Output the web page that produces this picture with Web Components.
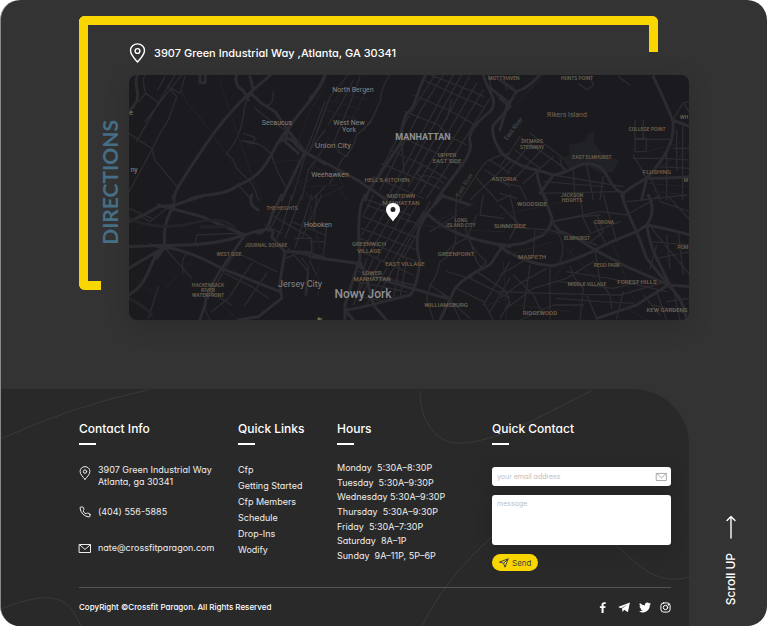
<!DOCTYPE html>
<html lang="en">
<head>
<meta charset="utf-8">
<meta name="viewport" content="width=device-width, initial-scale=1">
<title>Crossfit Paragon</title>
<style>
  body { margin: 0; background: #fff; color: #fff; font-family: Inter, "Open Sans", sans-serif; font-feature-settings: "cv11"; }
</style>
</head>
<body>
<page-shell id="top">
  <directions-panel>
    <span slot="address">3907 Green Industrial Way ,Atlanta, GA 30341</span>
    <city-map></city-map>
  </directions-panel>
  <site-footer slot="footer">
    <footer-column heading="Contact Info">
      <contact-list></contact-list>
    </footer-column>
    <footer-column heading="Quick Links">
      <quick-links></quick-links>
    </footer-column>
    <footer-column heading="Hours">
      <opening-hours></opening-hours>
    </footer-column>
    <footer-column heading="Quick Contact">
      <contact-form></contact-form>
    </footer-column>
    <span slot="legal">CopyRight ©Crossfit Paragon. All Rights Reserved</span>
    <social-links slot="social"></social-links>
  </site-footer>
  <scroll-up slot="rail"></scroll-up>
</page-shell>

<script>
const define = (name, html, setup) => {
  const template = document.createElement('template');
  template.innerHTML = html;
  customElements.define(name, class extends HTMLElement {
    constructor() {
      super();
      this.attachShadow({ mode: 'open' }).append(template.content.cloneNode(true));
    }
    connectedCallback() { if (setup) setup(this, this.shadowRoot); }
  });
};

/* ---------- icons ---------- */
const ICONS = {
  pin: ['0 0 16 20', '<path d="M8 19C5 15.5 1 12 1 7.600A7 6.700 0 0 1 15 7.600C15 12 11 15.500 8 19Z"/><circle cx="8" cy="8" r="2.400"/>'],
  phone: ['0 0 24 24', '<path d="M22 16.900v3a2 2 0 0 1-2.200 2A19.800 19.800 0 0 1 2.100 4.200 2 2 0 0 1 4.100 2h3a2 2 0 0 1 2 1.700c.1 1 .4 1.900.7 2.800a2 2 0 0 1-.5 2.100L8.100 9.900a16 16 0 0 0 6 6l1.300-1.300a2 2 0 0 1 2.100-.4c.9.3 1.800.6 2.800.7a2 2 0 0 1 1.700 2z"/>'],
  mail: ['0 0 24 18', '<path d="M1 1h22v16H1zM1.500 1.500 12 11 22.500 1.500"/>'],
  send: ['0 0 24 24', '<path d="M2 9.500 22 2 14.500 22 11 13zM22 2 11 13"/>'],
  arrow: ['0 0 10 24', '<path d="M5 23V1.500M1 5.500 5 1.500l4 4"/>'],
  facebook: ['0 0 8 13', '<path class="solid" d="M2.300 13V7.200H.3V4.900h2V3.200C2.300 1.200 3.500.2 5.300.2c.9 0 1.600.1 1.900.1v2.100H5.900c-1 0-1.200.5-1.200 1.200v1.300H7l-.3 2.300h-2V13z"/>'],
  telegram: ['0 0 14 13', '<path class="solid" d="M14 .5 11.600 12.200 7.300 9.100 5.200 11.700 4.700 7.800 11.300 2.800 3.700 7.300 0 6z"/>'],
  twitter: ['0 0 24 20', '<path class="solid" d="M24 2.400a9.800 9.800 0 0 1-2.800.8A4.900 4.900 0 0 0 23.300.5a9.900 9.900 0 0 1-3.100 1.200 4.900 4.900 0 0 0-8.400 4.500A14 14 0 0 1 1.700 1a4.900 4.900 0 0 0 1.500 6.600 4.900 4.900 0 0 1-2.200-.6 4.900 4.900 0 0 0 3.900 4.900 5 5 0 0 1-2.200.1 4.900 4.900 0 0 0 4.600 3.400A9.900 9.900 0 0 1 0 17.500 14 14 0 0 0 21.500 5c1-.7 1.800-1.600 2.500-2.600z"/>'],
  instagram: ['0 0 24 24', '<rect x="2" y="2" width="20" height="20" rx="6"/><circle cx="12" cy="12" r="4.800"/><circle cx="17.800" cy="6.200" r=".7"/>']
};
define('ui-icon', `
  <style>
    :host { display: block; flex: none; }
    svg { display: block; width: 100%; height: 100%; overflow: visible; fill: none; stroke: currentColor; stroke-linecap: round; stroke-linejoin: round; stroke-width: var(--line, 1px); }
    svg * { vector-effect: non-scaling-stroke; }
    .solid { fill: currentColor; stroke: none; }
  </style>
  <svg aria-hidden="true"></svg>`, (host, root) => {
  const [box, art] = ICONS[host.getAttribute('name')];
  const svg = root.querySelector('svg');
  svg.setAttribute('viewBox', box);
  if (host.hasAttribute('bold')) svg.setAttribute('style', '--line: 1.4px');
  svg.innerHTML = art;
});

/* ---------- page frame ---------- */
define('page-shell', `
  <style>
    :host { display: flex; flex-direction: column; box-sizing: border-box; margin-bottom: 2px; min-height: calc(100vh - 2px); background: #333; border-left: 1px solid #8a8a8a; border-radius: 20px; overflow: hidden; }
    .lower { display: grid; grid-template-columns: 1fr 78px; flex: 1; }
  </style>
  <slot></slot>
  <div class="lower"><slot name="footer"></slot><slot name="rail"></slot></div>`);

/* ---------- directions ---------- */
define('corner-bracket', `
  <style>
    :host { display: block; }
    .top, .side { position: absolute; box-sizing: border-box; border: 9px solid #f9d600; }
    .top { inset: 0 0 auto 0; height: 36px; border-bottom: 0; border-radius: 6px 6px 0 0; }
    .side { inset: 0 auto 0 0; width: 22px; border-right: 0; border-radius: 6px 0 0 6px; }
  </style>
  <div class="top"></div><div class="side"></div>`);

define('directions-panel', `
  <style>
    :host { display: block; position: relative; padding: 42px 78px 69px; }
    corner-bracket { position: absolute; inset: 16px 109px 99px 78px; }
    .grid { display: grid; grid-template-columns: 50px 1fr; position: relative; }
    .address { grid-column: 2; display: flex; align-items: center; gap: 8px; height: 21px; padding-bottom: 12px; font-size: 11px; font-weight: 500; }
    .address ui-icon { width: 17px; height: 20px; }
    h2 { align-self: start; margin: 0; padding: 45px 5px 0 0; writing-mode: vertical-rl; font: 700 21px/28px Lato, sans-serif; color: #456e87; }
    h2 span { display: block; transform: rotate(180deg); }
  </style>
  <corner-bracket></corner-bracket>
  <div class="grid">
    <div class="address"><ui-icon name="pin" bold></ui-icon><slot name="address"></slot></div>
    <h2><span>DIRECTIONS</span></h2>
    <slot></slot>
  </div>`);

/* ---------- map ---------- */
const LABELS = [
  ['town', 7, 353, 92, 'North Bergen'], ['town', 7, 277, 125, 'Secaucus'], ['town', 7, 349, 125, 'West New'], ['town', 7, 349, 132, 'York'],
  ['town', 8, 333, 148, 'Union City'], ['town', 7, 330, 177, 'Weehawken'], ['town', 7, 318, 227, 'Hoboken'],
  ['town', 9, 300, 287, 'Jersey City'], ['city', 12, 363, 298, 'Nowy Jork'], ['city strong', 9, 423, 140, 'MANHATTAN'],
  ['town', 7, 131, 115, 'e'], ['town', 7, 134, 172, 'ny'], ['isle', 7, 567, 117, 'Rikers Island'],
  ['area', 6, 447, 157, 'UPPER'], ['area', 6, 447, 163, 'EAST SIDE'], ['area', 6, 387, 182, "HELL'S KITCHEN"],
  ['area', 6, 401, 198, 'MIDTOWN'], ['area', 6, 401, 205, 'MANHATTAN'], ['area', 5, 504, 80, 'MOTT HAVEN'],
  ['area', 5, 577, 80, 'HUNTS POINT'], ['area', 5, 647, 131, 'COLLEGE POINT'], ['area', 5, 684, 119, 'WH'],
  ['area', 5, 532, 143, 'DITMARS'], ['area', 5, 532, 149, 'STEINWAY'], ['area', 5, 592, 159, 'EAST ELMHURST'],
  ['area', 6, 657, 174, 'FLUSHING'], ['area', 5, 686, 182, 'M'], ['area', 6, 504, 181, 'ASTORIA'],
  ['area', 5, 572, 197, 'JACKSON'], ['area', 5, 572, 202, 'HEIGHTS'], ['area', 6, 532, 206, 'WOODSIDE'],
  ['area', 5, 461, 222, 'LONG'], ['area', 5, 461, 227, 'ISLAND CITY'], ['area', 6, 510, 228, 'SUNNYSIDE'],
  ['area', 5, 604, 224, 'CORONA'], ['area', 5, 577, 240, 'ELMHURST'], ['area', 5, 683, 249, 'POM'],
  ['area', 6, 532, 259, 'MASPETH'], ['area', 5, 607, 267, 'REGO PARK'], ['area', 5, 587, 286, 'MIDDLE VILLAGE'],
  ['area', 6, 637, 284, 'FOREST HILLS'], ['area', 6, 667, 312, 'KEW GARDENS'], ['area', 6, 540, 315, 'RIDGEWOOD'],
  ['area', 6, 456, 256, 'GREENPOINT'], ['area', 6, 446, 307, 'WILLIAMSBURG'], ['area', 6, 369, 246, 'GREENWICH'],
  ['area', 6, 369, 253, 'VILLAGE'], ['area', 6, 405, 266, 'EAST VILLAGE'], ['area', 6, 372, 275, 'LOWER'],
  ['area', 6, 372, 281, 'MANHATTAN'], ['area', 5, 282, 210, 'THE HEIGHTS'], ['area', 5, 266, 247, 'JOURNAL SQUARE'],
  ['area', 5, 229, 256, 'WEST SIDE'], ['area', 5, 208, 287, 'HACKENSACK'], ['area', 5, 208, 292, 'RIVER'], ['area', 5, 208, 297, 'WATERFRONT']
];
define('city-map', `
  <style>
    :host { display: block; aspect-ratio: 560 / 245; border-radius: 8px; overflow: hidden; background: #1b1b1f; box-shadow: 0 6px 24px rgba(0, 0, 0, .16); }
    svg { display: block; width: 100%; height: 100%; }
    .roads { fill: none; stroke: #2b2b30; stroke-linejoin: round; stroke-linecap: round; }
    .roads path { stroke-width: 4px; }
    .roads .main { stroke-width: 9px; }
    .roads .faint { stroke: #242428; stroke-width: 3px; }
    .roads .land { fill: #202226; stroke: none; }
    text { font-family: Roboto, sans-serif; text-anchor: middle; }
    .town { fill: #858588; }
    .city { fill: #909093; font-weight: 500; }
    .strong { font-weight: 700; }
    .isle { fill: #6f6a60; }
    .area { fill: #736550; font-weight: 500; }
    .river { fill: #4a555c; }
    .river.east { fill: #4d483f; }
  </style>
  <svg viewBox="129 75 560 245" preserveAspectRatio="xMidYMid slice" role="img" aria-label="Map of New York">
    <g class="roads">
      <g transform="translate(125 70) scale(.3333)">
        <path class="main" d="M38 14C22 40 48 70 34 95Q24 112 12 125M438 14 375 68C300 140 260 190 160 350Q148 370 146 390M375 68 410 100 450 125 488 180C440 220 440 310 340 345C290 385 220 368 190 390M600 20C570 90 530 110 488 180L540 245 600 282M540 245 470 390M335 14Q325 45 355 62L370 90M375 20 385 60 370 80M465 215Q490 195 510 220T540 245M488 180 480 215 520 250M225 14v24h16V14"/>
        <path d="M150 14 100 100 35 215M60 14Q50 30 62 70L100 98M170 14 60 155M62 70Q45 90 40 95M130 50 155 80 130 150 105 190 82 237 12 365M12 190 82 237Q85 270 98 280L158 352M98 60 120 20M180 20 165 70 140 55M365 90C350 120 365 180 305 250Q330 270 335 295L365 325M355 190 390 202 385 222 350 212M350 212Q410 215 440 255C450 290 470 330 485 355M410 100Q445 120 445 65M390 115 440 155 480 180M600 180 540 260 500 390M600 230 550 300 530 390M600 95 560 200 540 250M600 120 575 190M340 345 380 390M370 330Q385 340 400 390M600 350 560 390"/>
        <path class="faint" d="M170 55Q180 105 220 135L330 290M280 20 340 200 390 345M395 345 410 390M600 50 550 130 520 220M440 280Q480 270 530 270M500 310 560 390M520 330 550 350M600 300 540 340"/>
      </g>
      <g transform="translate(310 70) scale(.3333)">
        <path class="main" d="M45 14Q30 55 0 85M348 14C320 60 320 110 290 130Q270 175 275 215C230 280 200 330 180 355L165 390M0 255Q90 300 150 335L230 390M520 14C530 60 570 90 540 125Q470 180 480 215C490 250 455 285 400 360L380 390M535 50 600 100M600 110 550 165Q540 200 580 255"/>
        <path d="M240 14Q210 60 212 90L180 160 140 195Q130 240 95 270L60 340M212 90 190 140 160 180M115 14 60 80 20 190 0 240M130 30 100 90 55 165M150 20 120 100 70 220M75 220 85 245 110 260 130 225M375 14 290 150 190 345M400 14 330 125 210 360M430 14 240 370M455 14 390 130 250 390M478 20 295 350M500 40 360 280 300 380M520 60 330 370M540 85 400 310 350 385M285 125 385 165 420 200 470 225M310 75 415 120 480 155 500 170M340 30 440 75 520 110M360 14 490 65 520 80M260 195 370 245 430 275 460 290M240 240 340 285 410 325M215 280 320 325 390 355M190 320 260 350 340 385M425 90 410 150M275 215 282 305M330 320Q370 310 400 340M340 285 320 310 350 340M600 250Q540 260 520 285L450 390M600 275 480 390M540 270 600 310M525 300 600 350M500 325 560 390M580 14 590 60M535 14 545 60"/>
        <path class="faint" d="M70 60 170 90M60 90 155 120M50 120 140 150M85 245 140 200M70 290 100 350 20 390M60 200 0 310M0 350 80 345 110 390M170 60 120 160M100 40 75 95M0 280 60 320M25 110 60 150"/>
      </g>
      <g transform="translate(500 70) scale(.3333)">
        <path class="land" d="M205 225 255 215Q265 180 285 185L280 215 310 255 358 270 340 305 300 310 260 285 210 300 185 265 210 255Z"/>
        <path class="main" d="M120 14Q90 50 50 65L0 30M50 65 20 110 0 180M0 85 30 110M0 245Q50 290 110 300L160 315C220 305 240 270 285 285S320 350 370 370Q400 345 440 325C470 290 530 230 518 150Q500 105 460 20M518 150 570 170M440 325Q500 325 570 320M110 300Q115 350 140 390M160 315 120 370M370 370V390M440 325 425 390"/>
        <path d="M235 40 262 60 280 45 270 20M355 20 390 45M405 150V245L438 245 440 205H405M430 150V205M405 208H515M400 255 440 325M400 265 480 265M518 150 550 98 570 95M550 98 570 130M520 235H570M490 265 570 270M470 290 570 295M500 245V390M530 180V300M548 170V390M455 330 480 390M0 290 60 200M20 310 95 215M45 325 130 235M70 340 160 260M45 240 120 295M65 205 160 270 200 300M90 190 190 265M0 335 60 350M160 315 370 350M130 335 310 350M180 265 190 305M220 300 225 390M260 285 280 390M310 320 300 390M60 350 80 390M0 370 50 385M120 370 350 365"/>
        <path class="faint" d="M0 110 65 60M40 110 105 40M80 70 130 20M440 245 540 220M460 300 570 240M440 340 570 350M460 365 570 375"/>
      </g>
      <g transform="translate(125 195) scale(.3333)">
        <path class="main" d="M240 0 150 30 100 35Q60 60 12 80M150 30Q110 80 120 155L90 185C70 230 60 270 12 300M12 155 120 150Q260 155 360 120T440 125L480 170 465 260 470 310 400 365 340 375M120 155 12 220M120 155Q200 170 290 220L465 290M290 220 360 120 230 65 100 30M290 220Q240 300 240 330L225 375M480 170Q540 165 600 190M400 115Q430 110 440 60L470 0M380 0Q370 30 400 45M75 150 130 160M95 190 120 155"/>
        <path d="M40 60 75 80 150 20 140 0M12 40 80 70M210 150 215 120 320 115 360 120M175 235Q165 190 190 170M120 160 200 250M100 275 70 370M330 170 250 310M380 205 310 310 260 350M425 235 360 330M350 180 455 230M300 235 380 275 430 310M255 290 320 330M240 345 255 375M440 60 560 130M420 90 470 115M470 40 430 110M500 0 470 100 455 130M530 0 480 130M560 0 510 160M590 0 530 130M480 170H560V130H510M490 160 550 230 545 300M530 190 550 215 540 300M500 80 600 120M480 190 520 175 560 185"/>
        <path class="faint" style="stroke-width:9px" d="M12 70Q100 110 200 85T330 100M12 310Q60 335 80 360M230 95H310"/>
        <path class="faint" d="M20 240 90 300M290 330 340 375M200 200 120 280M560 30 540 120M580 200V300"/>
      </g>
      <g transform="translate(310 195) scale(.3333)">
        <path class="main" d="M165 0C140 40 145 130 150 190L105 330V375M105 345Q150 340 220 320L300 300Q320 280 330 200C315 150 320 90 350 55L400 0M350 55Q430 130 580 150L600 155M580 150 540 210Q470 240 435 280L390 375M0 185 140 205Q170 240 220 255L410 310M390 0 480 30M150 200 170 250 190 330 230 375M105 345 130 375"/>
        <path d="M190 0 160 60M230 0 155 120M255 0 160 160M280 0 180 175M300 20 200 190M320 30 220 200M340 50 240 210M360 20 260 205M380 10 280 190M170 30 330 90M160 65 325 130M155 100 320 165M150 130 320 200M155 170 310 240M170 190 140 300M190 190 130 330M210 200 145 320M230 220 170 330M250 220 200 310M270 200 250 310M290 190 270 310M140 260 290 290M145 230 310 270M130 300 230 320M160 10 300 60M440 0 435 90Q450 170 390 200Q380 250 360 270L420 310M465 90Q470 150 530 200L480 250M500 60 475 120 500 200 520 225M400 180Q430 145 470 130M440 60 360 110M520 0 510 60 580 70M560 20 600 0M0 90 50 95 40 180M20 0 10 100M0 140H40M0 200 20 240M360 270 350 310 370 375M390 290 480 370M440 280 520 320 550 375M480 250 600 310M420 310 450 375M500 230 590 290 600 330M600 200 520 330M600 250 540 350M410 230 480 250"/>
        <path class="faint" d="M330 90 440 105 580 110M0 30 30 160M20 120 0 200M370 80 420 60 500 20M530 330 600 310M580 200 590 375"/>
      </g>
      <g transform="translate(500 195) scale(.3333)">
        <path class="main" d="M365 0Q380 50 410 110L440 190 505 270 570 275M410 110 440 90Q520 105 570 120M440 90Q470 50 445 0M410 110Q330 140 285 165T160 212Q80 210 0 155M285 165 380 215 505 270Q440 310 410 330L290 370M505 270Q550 310 560 375M440 90Q450 150 470 190T510 270M0 155 70 145 130 120Q160 90 155 65L130 0M285 165Q220 120 180 110L155 80"/>
        <path d="M0 95 150 105 290 150M150 80 300 50 380 60 450 20 480 0M160 80 240 65 300 60M240 0 250 70 270 110M310 0 330 70 350 140M280 80 320 150M170 110Q200 150 180 200M290 60 310 110 260 150M360 80 260 120M380 20 560 0M455 100 520 180 570 240M470 190 570 170M450 140 570 150M470 150 450 220M500 120 510 220M535 110 550 240M0 240 100 180 105 100M40 240 100 300 130 360M0 310 60 265 140 220M20 340 100 280 200 250 280 200M90 210 70 350M150 212V375M210 215Q225 260 250 280L240 375M285 165 300 260 330 300 335 340M200 230 330 250 500 290M180 260 340 280 420 260M0 290 140 295 360 300 500 260M170 310 300 320 400 325M260 300 290 370M370 290 350 370M60 375 160 330 250 330M430 300 480 360M470 290 500 375M500 320 570 310M460 330 560 355M510 10 570 75M480 20 570 50M0 30 60 90M30 0 50 90 30 130M0 370 30 320M520 280 540 375"/>
        <path class="faint" d="M0 60 100 40 240 10M20 180 160 140M190 150 320 290M100 110 210 120M340 150 400 310M50 330 210 350M220 160 160 260M380 340 440 375"/>
      </g>
    </g>
    <g class="labels"></g>
    <text class="river" font-size="6" transform="translate(515 130) rotate(-53)">East River</text>
    <text class="river east" font-size="6" transform="translate(466 186) rotate(-58)">East River</text>
    <path fill="#fff" fill-rule="evenodd" d="M393 221.500C390.500 217.500 386 214 386 209.500a7 6.600 0 0 1 14 0C400 214 395.500 217.500 393 221.500ZM393 207a2.500 2.500 0 1 0 0 5 2.500 2.500 0 0 0 0-5Z"/>
    <path fill="#736550" d="m318 317 5 2-6 2z"/>
  </svg>`, (host, root) => {
  root.querySelector('.labels').innerHTML = LABELS
    .map(([kind, size, x, y, name]) => `<text class="${kind}" font-size="${size}" x="${x}" y="${y}">${name}</text>`).join('');
});

/* ---------- footer ---------- */
define('site-footer', `
  <style>
    :host { display: flex; flex-direction: column; position: relative; background: #292929; border-radius: 0 56px 0 0; overflow: hidden; padding: 32px 18px 0 78px; }
    .curves { position: absolute; inset: 0; width: 100%; height: 100%; fill: none; stroke: #3a3a3a; }
    .columns { position: relative; display: grid; grid-template-columns: 159fr 99fr 155fr 179fr; padding-bottom: 16px; }
    .base { position: relative; display: flex; flex: 1; align-items: center; justify-content: space-between; border-top: 1px solid #555; font-size: 8px; font-weight: 500; }
  </style>
  <svg class="curves" viewBox="0 0 688 237" preserveAspectRatio="none" aria-hidden="true">
    <path d="M0 50Q69 18 146 1M0 220C30 208 58 202 71 221Q77 230 80 237M419 2C419 35 437 54 457 54C495 54 535 29 590 2M421 237C437 205 460 175 491 148C530 115 570 115 615 156C639 178 657 197 688 188"/>
  </svg>
  <div class="columns"><slot></slot></div>
  <div class="base"><slot name="legal"></slot><slot name="social"></slot></div>`);

define('footer-column', `
  <style>
    :host { display: flex; flex-direction: column; min-width: 0; }
    h3 { margin: 0 0 17px; font-size: 12px; line-height: 16px; font-weight: 500; white-space: nowrap; }
    h3::after { content: ""; display: block; width: 17px; height: 2px; margin-top: 6px; background: #fff; }
  </style>
  <h3></h3><slot></slot>`, (host, root) => { root.querySelector('h3').textContent = host.getAttribute('heading'); });

define('contact-list', `
  <style>
    :host { display: block; }
    address { display: grid; gap: 12px; padding-top: 2px; font: inherit; font-size: 9px; line-height: 12px; }
    a, div { display: flex; align-items: center; gap: 7px; min-height: 24px; color: #eee; text-decoration: none; white-space: nowrap; }
    ui-icon { width: 12px; height: 12px; }
    div ui-icon { align-self: start; height: 14px; padding-top: 2px; }
    a:last-child ui-icon { height: 9px; }
  </style>
  <address>
    <div><ui-icon name="pin"></ui-icon><span>3907 Green Industrial Way<br>Atlanta, ga 30341</span></div>
    <a href="tel:4045565885"><ui-icon name="phone"></ui-icon>(404) 556-5885</a>
    <a href="mailto:nate@crossfitparagon.com"><ui-icon name="mail"></ui-icon>nate@crossfitparagon.com</a>
  </address>`);

define('quick-links', `
  <style>
    nav { display: grid; font-size: 9px; line-height: 16px; }
    a { color: #eee; text-decoration: none; white-space: nowrap; }
  </style>
  <nav aria-label="Quick links">
    <a href="#cfp">Cfp</a><a href="#start">Getting Started</a><a href="#members">Cfp Members</a>
    <a href="#schedule">Schedule</a><a href="#drop-ins">Drop-Ins</a><a href="#wodify">Wodify</a>
  </nav>`);

define('opening-hours', `
  <style>
    :host { display: flex; flex: 1; padding-bottom: 9px; }
    ul { display: flex; flex-direction: column; justify-content: space-between; margin: 0; padding: 0; list-style: none; font-size: 9px; line-height: 12px; color: #eee; white-space: pre; }
  </style>
  <ul><li>Monday  5:30A–8:30P</li><li>Tuesday  5:30A–9:30P</li><li>Wednesday 5:30A–9:30P</li><li>Thursday  5:30A–9:30P</li><li>Friday  5:30A–7:30P</li><li>Saturday  8A–1P</li><li>Sunday  9A–11P, 5P–6P</li></ul>`);

define('contact-form', `
  <style>
    :host { display: block; padding-top: 5px; }
    form { display: grid; gap: 9px; justify-items: start; }
    label { display: grid; width: 100%; align-items: center; }
    input, textarea { grid-area: 1 / 1; box-sizing: border-box; width: 100%; margin: 0; border: 0; border-radius: 3px; padding: 4px 5px; background: #fff; color: #333; font: inherit; font-size: 7px; line-height: 10px; font-feature-settings: inherit; box-shadow: 0 3px 16px rgba(0, 0, 0, .16); }
    input { height: 19px; padding-right: 20px; }
    textarea { display: block; height: 50px; resize: none; }
    ::placeholder { color: #bdbdbd; opacity: 1; }
    label ui-icon { grid-area: 1 / 1; justify-self: end; width: 11px; height: 8px; margin-right: 4px; color: #aaa; }
    button { display: flex; align-items: center; gap: 3px; height: 17px; margin: 0; border: 0; border-radius: 9px; padding: 0 7px; background: #f9d600; color: #444; font: inherit; font-size: 8px; font-feature-settings: inherit; }
    button ui-icon { width: 10px; height: 10px; }
  </style>
  <form>
    <label><input type="email" aria-label="Email address" placeholder="your email address"><ui-icon name="mail"></ui-icon></label>
    <label><textarea aria-label="Message" placeholder="message"></textarea></label>
    <button type="button"><ui-icon name="send"></ui-icon>Send</button>
  </form>`);

define('social-links', `
  <style>
    :host { display: flex; align-items: center; gap: 9px; }
    a { display: block; color: #fff; }
    ui-icon { width: 12px; height: 11px; }
    a:first-child ui-icon { width: 7px; height: 12px; }
    a:last-child ui-icon { width: 11px; }
  </style>
  <a href="#facebook" aria-label="Facebook"><ui-icon name="facebook"></ui-icon></a>
  <a href="#telegram" aria-label="Telegram"><ui-icon name="telegram"></ui-icon></a>
  <a href="#twitter" aria-label="Twitter"><ui-icon name="twitter"></ui-icon></a>
  <a href="#instagram" aria-label="Instagram"><ui-icon name="instagram"></ui-icon></a>`);

define('scroll-up', `
  <style>
    :host { display: flex; flex-direction: column; justify-content: flex-end; align-items: center; padding: 0 0 21px 5px; }
    a { display: grid; justify-items: center; gap: 14px; color: #fff; text-decoration: none; font-size: 12px; line-height: 16px; font-weight: 500; }
    span { writing-mode: vertical-rl; transform: rotate(180deg); }
    ui-icon { width: 10px; height: 24px; }
  </style>
  <a href="#top"><ui-icon name="arrow" bold></ui-icon><span>Scroll UP</span></a>`);
</script>
</body>
</html>
